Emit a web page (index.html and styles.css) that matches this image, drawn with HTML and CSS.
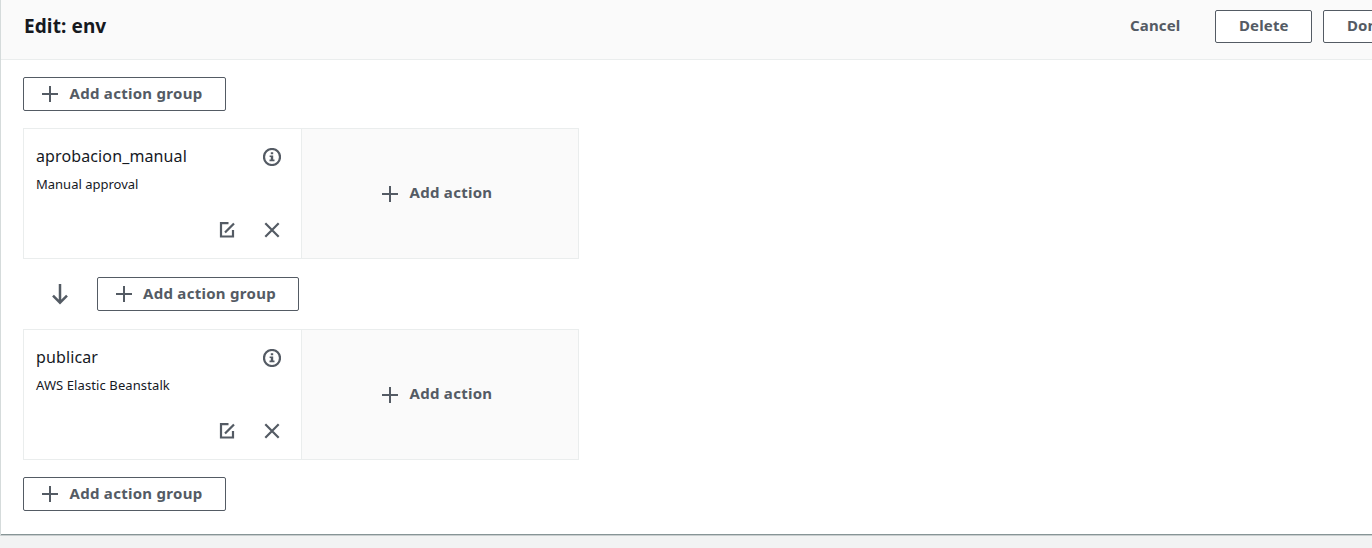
FILE: index.html
```
<!DOCTYPE html>
<html lang="en">
<head>
<meta charset="utf-8">
<title>Edit: env</title>
<link rel="stylesheet" href="styles.css">
</head>
<body>
<svg class="defs" width="0" height="0">
  <symbol id="plus" viewBox="0 0 16 16"><path d="M8 0v16M0 8h16"/></symbol>
  <symbol id="info" viewBox="0 0 18 18"><circle cx="9" cy="9" r="8"/><path class="solid" d="M7.800 4.200h2.400v2H7.800zM6.600 7.500h3.600v4h1.300v1.700H6.500v-1.700h1.300V9.100H6.600z"/></symbol>
  <symbol id="edit" viewBox="0 0 16 16"><path d="M9.500 1.200H2v13.300h12V8M6 10.600L15 1.500"/></symbol>
  <symbol id="close" viewBox="0 0 16 16"><path d="M1.300 1.300l13.400 13.400M14.700 1.300L1.300 14.700"/></symbol>
  <symbol id="arrow" viewBox="0 0 16 22"><path d="M8 1v19M1 12.700l7 7 7-7"/></symbol>
</svg>
<main class="panel">
  <header class="head">
    <h1 class="title">Edit: env</h1>
    <div class="buttons">
      <button class="link">Cancel</button>
      <button class="btn delete">Delete</button>
      <button class="btn done">Done</button>
    </div>
  </header>
  <section class="stage">
    <button class="btn add"><svg class="icon plus"><use href="#plus"/></svg><span class="label">Add action group</span></button>
    <div class="group">
      <article class="card">
        <div class="top"><div class="name">aprobacion_manual</div><svg class="icon info"><use href="#info"/></svg></div>
        <div class="provider">Manual approval</div>
        <div class="tools"><svg class="icon edit"><use href="#edit"/></svg><svg class="icon close"><use href="#close"/></svg></div>
      </article>
      <button class="slot"><svg class="icon plus"><use href="#plus"/></svg><span class="label">Add action</span></button>
    </div>
    <div class="between">
      <svg class="icon arrow"><use href="#arrow"/></svg>
      <button class="btn add narrow"><svg class="icon plus"><use href="#plus"/></svg><span class="label">Add action group</span></button>
    </div>
    <div class="group">
      <article class="card">
        <div class="top"><div class="name">publicar</div><svg class="icon info"><use href="#info"/></svg></div>
        <div class="provider wide">AWS Elastic Beanstalk</div>
        <div class="tools"><svg class="icon edit"><use href="#edit"/></svg><svg class="icon close"><use href="#close"/></svg></div>
      </article>
      <button class="slot"><svg class="icon plus"><use href="#plus"/></svg><span class="label">Add action</span></button>
    </div>
    <button class="btn add last"><svg class="icon plus"><use href="#plus"/></svg><span class="label">Add action group</span></button>
  </section>
</main>
</body>
</html>
```
FILE: styles.css
```
* { box-sizing: border-box; }
body {
  margin: 0;
  height: 548px;
  overflow: hidden;
  background: #f2f3f3;
  color: #16191f;
  font-family: "Noto Sans", "Open Sans", sans-serif;
}
.defs { position: absolute; }
.panel {
  height: 536px;
  overflow: hidden;
  background: #fff;
  border-left: 1px solid #d5dbdb;
  border-bottom: 1px solid #c9cecf;
  box-shadow: inset 0 -1px 0 #879596;
}
.head {
  display: flex;
  justify-content: space-between;
  height: 60px;
  background: #fafafa;
  border-bottom: 1px solid #eaeded;
}
.title { margin: 13px 0 0 23px; font-size: 19px; line-height: 26px; font-weight: 700; letter-spacing: 0.1px; }
.buttons { display: flex; margin-top: 10px; width: 242px; flex: none; }
button {
  margin: 0;
  padding: 0;
  font: 700 15px/20px "Noto Sans", "Open Sans", sans-serif;
  letter-spacing: 0.13px;
  color: #545b64;
  white-space: nowrap;
  text-align: left;
  background: none;
  border: 0;
}
.link { width: 85px; height: 31px; flex: none; padding-bottom: 1px; }
.btn {
  display: flex;
  align-items: center;
  flex: none;
  height: 33px;
  background: #fff;
  border: 1px solid #545b64;
  border-radius: 2px;
}
.delete { width: 97px; padding: 0 0 3px 23px; }
.done { width: 90px; margin-left: 11px; padding: 0 0 3px 23px; }
.stage { display: flex; flex-direction: column; align-items: flex-start; padding: 17px 0 0 22px; }
.add, .narrow { width: 203px; height: 34px; padding: 0 0 0 18px; }
.narrow { width: 202px; }
.label { padding-bottom: 2px; letter-spacing: 0.28px; }
.slot .label { padding-bottom: 3px; }
.icon { display: block; flex: none; fill: none; stroke: #545b64; stroke-width: 2; }
.solid { fill: #545b64; stroke: none; }
.plus { width: 16px; height: 16px; margin-right: 11.500px; }
.narrow .plus { margin-right: 11px; }
.group {
  display: flex;
  width: 556px;
  height: 131px;
  margin-top: 17px;
  border: 1px solid #eaeded;
}
.card { width: 278px; padding: 15px 20px 0 12px; border-right: 1px solid #eaeded; }
.top { display: flex; justify-content: space-between; height: 28px; }
.name { font-size: 16px; line-height: 24px; letter-spacing: 0.12px; }
.info { width: 18px; height: 18px; margin-top: 4px; stroke-width: 2.200; }
.provider { font-size: 13px; line-height: 24px; height: 50px; }
.wide { letter-spacing: 0.1px; }
.tools { display: flex; justify-content: flex-end; gap: 29px; padding-right: 1px; }
.edit, .close { width: 16px; height: 16px; stroke-width: 2.200; }
.slot { display: flex; align-items: center; flex: 1; padding-left: 80px; background: #fafafa; }
.between { display: flex; align-items: center; margin-top: 18px; padding-left: 29px; }
.arrow { width: 16px; height: 22px; margin-right: 29px; stroke-width: 2.500; }
.between + .group { margin-top: 18px; }
.last { margin-top: 17px; }
```
